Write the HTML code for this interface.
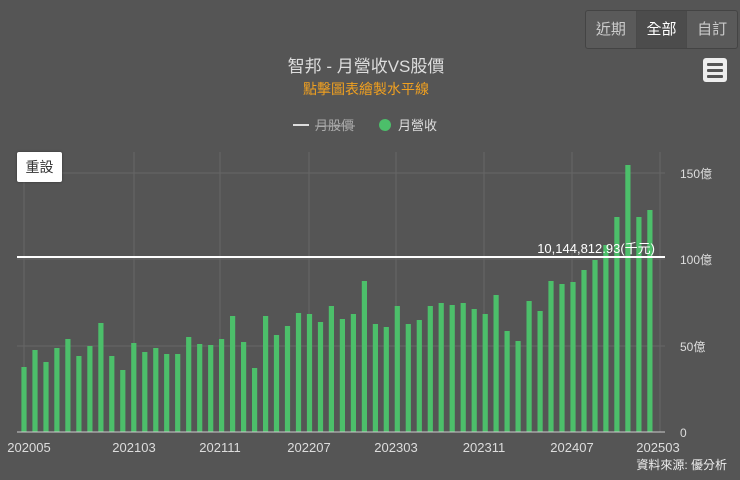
<!DOCTYPE html>
<html><head><meta charset="utf-8"><style>
body{margin:0;width:740px;height:480px;background:#555;overflow:hidden;font-family:"Liberation Sans","Noto Sans CJK TC",sans-serif;}
svg{position:absolute;left:0;top:0}
.btns{position:absolute;left:585px;top:10px;width:151px;height:37px;border:1px solid #444;border-radius:3px;display:flex;background:#5a5a5a}
.btns div{flex:1;text-align:center;line-height:37px;font-size:15px;color:#ccc;border-left:1px solid #4a4a4a}
.btns div:first-child{border-left:none}
.btns .on{background:#4c4c4c;color:#fff}
.menu{position:absolute;left:703px;top:58px;width:24px;height:24px;background:#eee;border-radius:3px}
.menu i{position:absolute;left:4px;width:16px;height:3px;background:#555;border-radius:1px}
.reset{position:absolute;left:17px;top:152px;width:45px;height:30px;background:#fff;border-radius:2px;font-size:14px;line-height:30px;text-align:center;color:#333;box-shadow:0 0 2px #333}
</style></head><body>
<svg id="c" width="740" height="480">
<g stroke="#666" stroke-width="1">
<line x1="24" y1="152" x2="24" y2="432"/><line x1="134" y1="152" x2="134" y2="432"/><line x1="220" y1="152" x2="220" y2="432"/><line x1="309" y1="152" x2="309" y2="432"/><line x1="396" y1="152" x2="396" y2="432"/><line x1="484" y1="152" x2="484" y2="432"/><line x1="572" y1="152" x2="572" y2="432"/><line x1="660" y1="152" x2="660" y2="432"/>
<line x1="17" y1="173" x2="665" y2="173"/><line x1="17" y1="259" x2="665" y2="259"/><line x1="17" y1="346" x2="665" y2="346"/>
</g>
<g id="bars" fill="#4cbf6a"></g>
<line x1="17" y1="432" x2="665" y2="432" stroke="#ccc" stroke-width="1"/>
<line x1="17" y1="257" x2="665" y2="257" stroke="#fff" stroke-width="2"/>
<text x="655" y="253" fill="#fff" font-size="13" text-anchor="end">10,144,812.93(千元)</text>
<g fill="#ddd" font-size="12">
<text x="680" y="178">150億</text><text x="680" y="264">100億</text><text x="680" y="351">50億</text><text x="680" y="437">0</text>
</g>
<g fill="#ddd" font-size="13" text-anchor="middle">
<text x="29" y="452">202005</text><text x="134" y="452">202103</text><text x="220" y="452">202111</text><text x="309" y="452">202207</text><text x="396" y="452">202303</text><text x="484" y="452">202311</text><text x="572" y="452">202407</text><text x="658" y="452">202503</text>
</g>
<text x="727" y="469" fill="#eee" font-size="12" text-anchor="end">資料來源: 優分析</text>
<text x="366" y="72" fill="#ddd" font-size="17" text-anchor="middle">智邦 - 月營收VS股價</text>
<text x="366" y="94" fill="#f0a020" font-size="14" text-anchor="middle">點擊圖表繪製水平線</text>
<line x1="293" y1="125" x2="309" y2="125" stroke="#ddd" stroke-width="2"/>
<text x="315" y="130" fill="#aaa" font-size="13">月股價</text>
<line x1="315" y1="126" x2="355" y2="126" stroke="#aaa" stroke-width="1"/>
<circle cx="385" cy="125" r="6" fill="#4cbf6a"/>
<text x="398" y="130" fill="#ddd" font-size="13">月營收</text>
</svg>
<div class="btns"><div>近期</div><div class="on">全部</div><div>自訂</div></div>
<div class="menu"><i style="top:5px"></i><i style="top:11px"></i><i style="top:17px"></i></div>
<div class="reset">重設</div>
<script>
var t=[367,350,362,348,339,356,346,323,356,370,343,352,348,354,354,337,344,345,339,316,342,368,316,335,326,313,314,322,306,319,314,281,324,327,306,324,320,306,303,305,303,309,314,295,331,341,301,311,281,284,282,270,260,245,217,165,217,210];
var g=document.getElementById('bars'),s='';
for(var i=0;i<t.length;i++){var x=24+i*10.98;s+='<rect x="'+(x-2.6).toFixed(1)+'" y="'+t[i]+'" width="5.2" height="'+(432-t[i])+'"/>';}
g.innerHTML=s;
</script>
</body></html>
